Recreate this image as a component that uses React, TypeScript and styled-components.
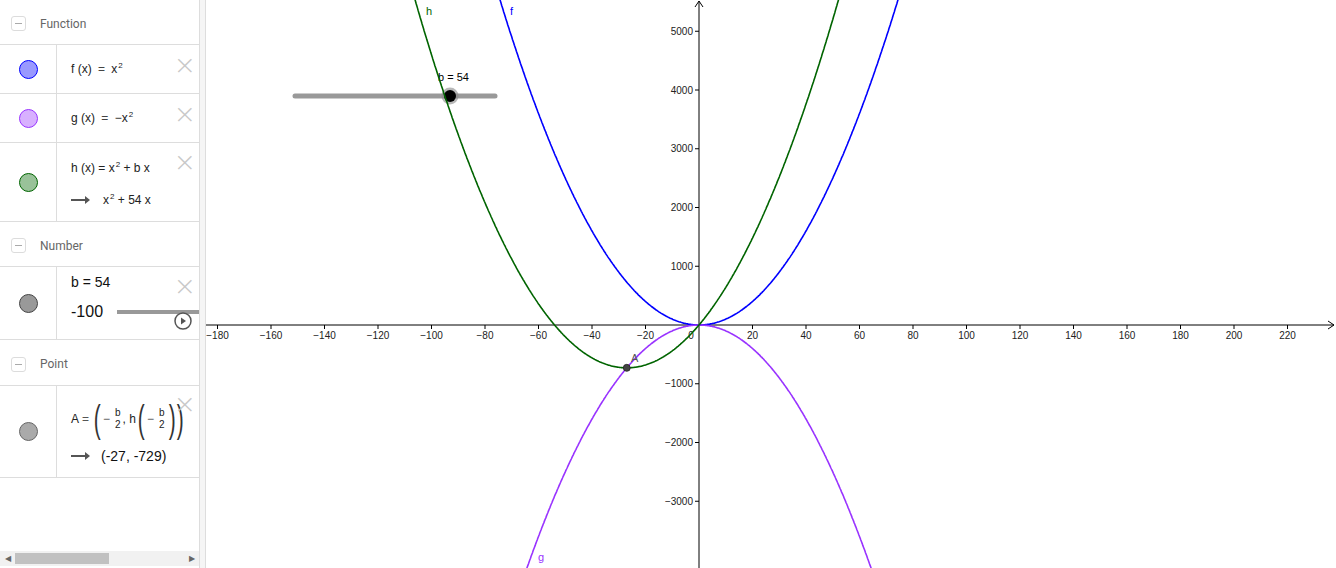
import React from 'react';
import styled, { createGlobalStyle } from 'styled-components';

const GlobalStyle = createGlobalStyle`
  html, body {
    margin: 0;
    padding: 0;
    width: 1336px;
    height: 568px;
    overflow: hidden;
    background: #fff;
    font-family: "Liberation Sans", Arial, sans-serif;
  }
  * { box-sizing: border-box; }
`;

// graph mapping (page coordinates)
const OX = 699;
const OY = 325;
const SX = 2.675;
const SY = 0.05875;
const px = (x: number) => OX + x * SX;
const py = (y: number) => OY - y * SY;

const curve = (fn: (x: number) => number) => {
  const pts: string[] = [];
  for (let x = -200; x <= 240; x += 0.25) {
    const y = fn(x);
    if (y > 7000 || y < -6000) continue;
    pts.push(`${px(x).toFixed(1)},${py(y).toFixed(1)}`);
  }
  return 'M' + pts.join(' L');
};

const B = 54;
const xTicks = Array.from({ length: 21 }, (_, i) => -180 + i * 20).filter(v => v !== 0);
const yTicks = [-3000, -2000, -1000, 1000, 2000, 3000, 4000, 5000];
const fmt = (v: number) => (v < 0 ? '\u2212' + Math.abs(v) : String(v));

export default function App() {
  return (
    <>
      <GlobalStyle />
      <Page>
        <Sidebar>
          <List>
            <Header>
              <Toggle />
              <span>Function</span>
            </Header>
            <Row $h={49}>
              <MarkerCell>
                <Marker $fill="#9999ff" $stroke="#0000ff" />
              </MarkerCell>
              <Content>
                <Line>
                  f (x) <Op>=</Op> x<sup>2</sup>
                </Line>
                <Delete $top={6}>×</Delete>
              </Content>
            </Row>
            <Row $h={49}>
              <MarkerCell>
                <Marker $fill="#d8b0ff" $stroke="#9933ff" />
              </MarkerCell>
              <Content>
                <Line>
                  g (x) <Op>=</Op> −x<sup>2</sup>
                </Line>
                <Delete $top={6}>×</Delete>
              </Content>
            </Row>
            <Row $h={79}>
              <MarkerCell>
                <Marker $fill="#99c299" $stroke="#006400" />
              </MarkerCell>
              <Content>
                <Stack $gap={18} $shift={3}>
                  <Line>
                    h (x) = x<sup>2</sup> + b x
                  </Line>
                  <Line>
                    <Arrow />
                    <Indent>
                      x<sup>2</sup> + 54 x
                    </Indent>
                  </Line>
                </Stack>
                <Delete $top={5}>×</Delete>
              </Content>
            </Row>
            <Header>
              <Toggle />
              <span>Number</span>
            </Header>
            <Row $h={73}>
              <MarkerCell>
                <Marker $fill="#999999" $stroke="#444444" />
              </MarkerCell>
              <Content $top>
                <Stack $gap={13}>
                  <Value>b = 54</Value>
                  <SliderLine>
                    <Big>-100</Big>
                    <Track />
                  </SliderLine>
                </Stack>
                <Delete $top={5}>×</Delete>
                <Play>
                  <svg width="18" height="18" viewBox="0 0 18 18">
                    <circle cx="9" cy="9" r="8" fill="#fff" stroke="#555" strokeWidth="1.5" />
                    <path d="M7 5.5 L12 9 L7 12.5 Z" fill="#555" />
                  </svg>
                </Play>
              </Content>
            </Row>
            <Header $h={46}>
              <Toggle />
              <span>Point</span>
            </Header>
            <Row $h={92}>
              <MarkerCell>
                <Marker $fill="#aaaaaa" $stroke="#666666" />
              </MarkerCell>
              <Content>
                <Stack $gap={11}>
                  <Formula>
                    <span>A</span>
                    <FOp>=</FOp>
                    <Paren>(</Paren>
                    <FOp>−</FOp>
                    <Frac>
                      <span>b</span>
                      <span>2</span>
                    </Frac>
                    <span>,&nbsp;h</span>
                    <Paren>(</Paren>
                    <FOp>−</FOp>
                    <Frac>
                      <span>b</span>
                      <span>2</span>
                    </Frac>
                    <Paren>)</Paren>
                    <Paren>)</Paren>
                  </Formula>
                  <Line>
                    <Arrow />
                    <Result>(-27, -729)</Result>
                  </Line>
                </Stack>
                <Delete $top={4}>×</Delete>
              </Content>
            </Row>
          </List>
          <ScrollBar>
            <ScrollArrow>◀</ScrollArrow>
            <ScrollTrack>
              <Thumb />
            </ScrollTrack>
            <ScrollArrow>▶</ScrollArrow>
          </ScrollBar>
        </Sidebar>
        <Divider />
        <GraphPane>
          <svg width="1130" height="568" viewBox="206 0 1130 568">
            {/* axes */}
            <line x1="206" y1={OY} x2="1334" y2={OY} stroke="#000" strokeWidth="1" />
            <path d={`M1328 ${OY - 4} L1334 ${OY} L1328 ${OY + 4}`} fill="none" stroke="#000" />
            <line x1={OX} y1="1" x2={OX} y2="568" stroke="#000" strokeWidth="1" />
            <path d={`M${OX - 4} 7 L${OX} 1 L${OX + 4} 7`} fill="none" stroke="#000" />
            {xTicks.map(v => (
              <g key={v}>
                <line x1={px(v)} y1={OY} x2={px(v)} y2={OY + 4} stroke="#000" />
                <text x={px(v)} y={OY + 14} fontSize="10" textAnchor="middle" fill="#222">
                  {fmt(v)}
                </text>
              </g>
            ))}
            <text x={691} y={OY + 14} fontSize="10" textAnchor="middle" fill="#222">0</text>
            {yTicks.map(v => (
              <g key={v}>
                <line x1={OX - 4} y1={py(v)} x2={OX} y2={py(v)} stroke="#000" />
                <text x={OX - 6} y={py(v) + 3.5} fontSize="10" textAnchor="end" fill="#222">
                  {fmt(v)}
                </text>
              </g>
            ))}

            {/* slider b */}
            <line x1="295" y1="96" x2="495" y2="96" stroke="#999" strokeWidth="5" strokeLinecap="round" />
            <circle cx="450" cy="96" r="8.5" fill="#888" opacity="0.6" />
            <circle cx="450" cy="96" r="6" fill="#000" />
            <text x="438" y="81" fontSize="11" fill="#000">b = 54</text>

            {/* curves */}
            <path d={curve(x => x * x)} fill="none" stroke="#0000ff" strokeWidth="1.6" />
            <path d={curve(x => -x * x)} fill="none" stroke="#9933ff" strokeWidth="1.6" />
            <path d={curve(x => x * x + B * x)} fill="none" stroke="#006400" strokeWidth="1.6" />

            {/* labels */}
            <text x="426" y="15" fontSize="11" fill="#006400">h</text>
            <text x="510" y="15" fontSize="11" fill="#0000ff">f</text>
            <text x="538" y="561" fontSize="11" fill="#9933ff">g</text>

            {/* point A */}
            <circle cx={px(-27)} cy={py(-729)} r="3.5" fill="#444" stroke="#222" strokeWidth="0.8" />
            <text x="631" y="362" fontSize="11" fill="#555">A</text>
          </svg>
        </GraphPane>
      </Page>
    </>
  );
}

const Page = styled.div`
  display: flex;
  width: 1336px;
  height: 568px;
`;

const Sidebar = styled.div`
  width: 199px;
  height: 568px;
  display: flex;
  flex-direction: column;
  overflow: hidden;
  background: #fff;
`;

const List = styled.div`
  flex: 1;
  display: flex;
  flex-direction: column;
`;

const Header = styled.div<{ $h?: number }>`
  height: ${p => p.$h ?? 45}px;
  display: flex;
  align-items: center;
  gap: 14px;
  padding-left: 11px;
  padding-top: 3px;
  border-bottom: 1px solid #dddddd;
  font-family: Roboto, "Liberation Sans", sans-serif;
  font-size: 12px;
  color: #666;
`;

const Toggle = styled.div`
  width: 15px;
  height: 15px;
  border: 1px solid #dcdcdc;
  border-radius: 3px;
  position: relative;
  &::after {
    content: '';
    position: absolute;
    left: 3px;
    right: 3px;
    top: 6px;
    height: 1px;
    background: #aaa;
  }
`;

const Row = styled.div<{ $h: number }>`
  height: ${p => p.$h}px;
  display: flex;
  border-bottom: 1px solid #dddddd;
`;

const MarkerCell = styled.div`
  width: 57px;
  flex-shrink: 0;
  display: flex;
  align-items: center;
  justify-content: center;
  border-right: 1px solid #dddddd;
`;

const Marker = styled.div<{ $fill: string; $stroke: string }>`
  width: 19px;
  height: 19px;
  border-radius: 50%;
  background: ${p => p.$fill};
  border: 1px solid ${p => p.$stroke};
`;

const Content = styled.div<{ $top?: boolean }>`
  flex: 1;
  position: relative;
  display: flex;
  align-items: ${p => (p.$top ? 'flex-start' : 'center')};
  padding-left: 14px;
  padding-top: ${p => (p.$top ? '7px' : '0')};
  overflow: hidden;
`;

const Stack = styled.div<{ $gap: number; $shift?: number }>`
  display: flex;
  flex-direction: column;
  gap: ${p => p.$gap}px;
  margin-top: ${p => p.$shift ?? 0}px;
`;

const Line = styled.div`
  display: block;
  font-size: 12px;
  line-height: 14px;
  color: #222;
  white-space: nowrap;
  sup {
    font-size: 8px;
    line-height: 0;
    vertical-align: 5px;
    margin-left: 1px;
  }
`;

const Op = styled.span`
  margin: 0 3px;
  color: #444;
`;

const Indent = styled.span`
  margin-left: 15px;
`;

const Arrow = styled.span`
  display: inline-block;
  vertical-align: middle;
  width: 17px;
  height: 2px;
  background: #555;
  position: relative;
  &::after {
    content: '';
    position: absolute;
    right: -2px;
    top: -3px;
    border-left: 5px solid #555;
    border-top: 4px solid transparent;
    border-bottom: 4px solid transparent;
  }
`;

const Delete = styled.div<{ $top: number }>`
  position: absolute;
  right: 3px;
  top: ${p => p.$top}px;
  font-family: "DejaVu Sans", sans-serif;
  font-size: 27px;
  font-weight: 200;
  line-height: 1;
  color: #c8c8c8;
`;

const Value = styled.div`
  font-size: 14px;
  line-height: 16px;
  color: #111;
`;

const SliderLine = styled.div`
  display: flex;
  align-items: center;
  gap: 14px;
  white-space: nowrap;
`;

const Big = styled.span`
  font-size: 16px;
  line-height: 18px;
  color: #111;
`;

const Track = styled.div`
  width: 120px;
  height: 4px;
  background: #999;
  flex-shrink: 0;
`;

const Play = styled.div`
  position: absolute;
  right: 7px;
  bottom: 9px;
  line-height: 0;
`;

const Formula = styled.div`
  display: flex;
  align-items: center;
  font-size: 12px;
  color: #222;
  white-space: nowrap;
`;

const FOp = styled.span`
  margin: 0 3px;
  color: #555;
`;

const Paren = styled.span`
  display: inline-block;
  width: 8px;
  text-align: center;
  font-size: 38px;
  font-weight: 300;
  line-height: 1;
  color: #333;
  transform: scaleX(0.55);
`;

const Frac = styled.span`
  display: inline-flex;
  flex-direction: column;
  align-items: center;
  font-size: 10px;
  line-height: 12px;
  margin: 0 2px;
`;

const Result = styled.span`
  font-size: 14px;
  margin-left: 13px;
  color: #111;
  vertical-align: middle;
`;

const ScrollBar = styled.div`
  height: 15px;
  margin-bottom: 2px;
  display: flex;
  align-items: center;
  background: #f1f1f1;
`;

const ScrollArrow = styled.div`
  width: 15px;
  font-size: 8px;
  color: #666;
  text-align: center;
`;

const ScrollTrack = styled.div`
  flex: 1;
  height: 11px;
  display: flex;
`;

const Thumb = styled.div`
  width: 94px;
  height: 11px;
  background: #c1c1c1;
`;

const Divider = styled.div`
  width: 7px;
  height: 568px;
  background: #f5f5f5;
  border-left: 1px solid #dddddd;
  border-right: 1px solid #dddddd;
`;

const GraphPane = styled.div`
  flex: 1;
  height: 568px;
  overflow: hidden;
  svg {
    display: block;
    font-family: "Liberation Sans", Arial, sans-serif;
  }
`;
